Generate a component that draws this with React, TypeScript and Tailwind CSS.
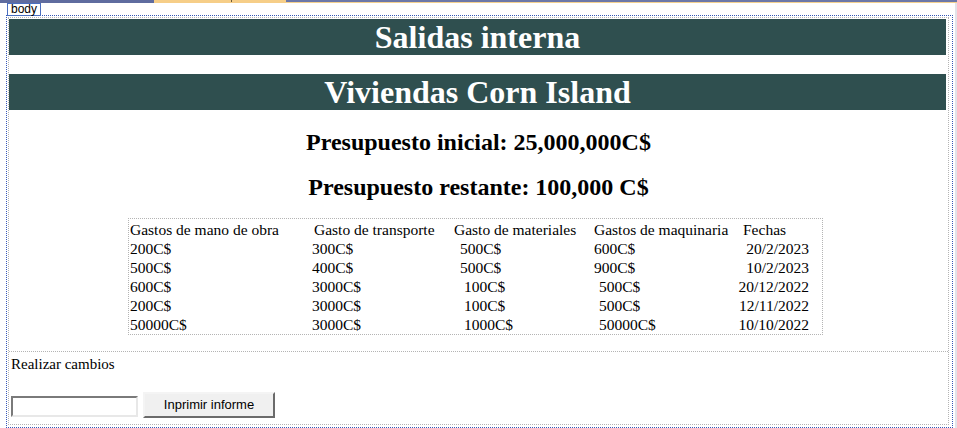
import React from 'react';

const filas = [
    { mano: '200C$', transporte: '300C$', materiales: '500C$', maquinaria: '600C$', fecha: '20/2/2023', padMat: 'pl-[6px]', padMaq: 'pl-0' },
    { mano: '500C$', transporte: '400C$', materiales: '500C$', maquinaria: '900C$', fecha: '10/2/2023', padMat: 'pl-[6px]', padMaq: 'pl-0' },
    { mano: '600C$', transporte: '3000C$', materiales: '100C$', maquinaria: '500C$', fecha: '20/12/2022', padMat: 'pl-[10px]', padMaq: 'pl-[5px]' },
    { mano: '200C$', transporte: '3000C$', materiales: '100C$', maquinaria: '500C$', fecha: '12/11/2022', padMat: 'pl-[10px]', padMaq: 'pl-[5px]' },
    { mano: '50000C$', transporte: '3000C$', materiales: '1000C$', maquinaria: '50000C$', fecha: '10/10/2022', padMat: 'pl-[10px]', padMaq: 'pl-[5px]' },
];

export default function App() {
    return (
        <div className="relative w-[957px] h-[428px] overflow-hidden bg-white flex flex-col text-black font-['Liberation_Serif','Times_New_Roman',serif]">
            {/* Designer top strip */}
            <div className="flex h-[3px] shrink-0">
                <div className="w-[154px] bg-[#5f6c9f]" />
                <div className="w-[132px] bg-[#f6ce88] relative">
                    <div className="absolute left-[77px] top-0 w-[1px] h-[2px] bg-[#6a5a3a]" />
                </div>
                <div className="flex-1 flex flex-col">
                    <div className="h-[2px] bg-[#6b77a8]" />
                    <div className="h-[1px] bg-[#f3d08f]" />
                </div>
            </div>

            {/* Tag label */}
            <div className="absolute left-[7px] top-[3px] w-[34px] h-[13px] border border-[#4a6fc0] bg-white text-[12px] leading-[11px] pl-[3px] font-['Liberation_Sans',Arial,sans-serif] z-10">
                body
            </div>

            <div className="flex flex-1">
                <div className="flex-1">
                    {/* body outline */}
                    <div className="mt-[12px] ml-[6px] w-[947px] h-[413px] border border-dotted border-[#3558b8]">
                        {/* form outline */}
                        <div className="ml-[1px] mt-[1px] w-[941px] h-[408px] border border-dotted border-[#b4b4b4] flex flex-col">
                            <div className="mt-[1px] mr-[2px] h-[36px] bg-[#2f4f4f] text-white font-bold text-[32px] leading-[36px] text-center">
                                Salidas interna
                            </div>
                            <div className="mt-[19px] mr-[2px] h-[36px] bg-[#2f4f4f] text-white font-bold text-[32px] leading-[36px] text-center">
                                Viviendas Corn Island
                            </div>

                            <div className="mt-[18px] h-[28px] leading-[28px] text-[24px] font-bold text-center">
                                Presupuesto inicial: 25,000,000C$
                            </div>
                            <div className="mt-[17px] h-[28px] leading-[28px] text-[24px] font-bold text-center">
                                Presupuesto restante: 100,000 C$
                            </div>

                            {/* Tabla de gastos */}
                            <div className="mt-[17px] ml-[119px] w-[695px] border border-dotted border-[#b4b4b4] pt-[1px] pl-[1px] text-[15.5px] leading-[19px]">
                                <div className="grid grid-cols-[182px_142px_140px_143px_1fr] h-[19px]">
                                    <div>Gastos de mano de obra</div>
                                    <div className="pl-[2px]">Gasto de transporte</div>
                                    <div>Gasto de materiales</div>
                                    <div>Gastos de maquinaria</div>
                                    <div className="pl-[6px]">Fechas</div>
                                </div>
                                {filas.map((f, idx) => (
                                    <div key={idx} className="grid grid-cols-[182px_142px_140px_143px_1fr] h-[19px]">
                                        <div>{f.mano}</div>
                                        <div>{f.transporte}</div>
                                        <div className={f.padMat}>{f.materiales}</div>
                                        <div className={f.padMaq}>{f.maquinaria}</div>
                                        <div className="text-right pr-[13px]">{f.fecha}</div>
                                    </div>
                                ))}
                            </div>

                            {/* Realizar cambios */}
                            <div className="mt-[16px] flex-1 border-t border-dotted border-[#b4b4b4]">
                                <div className="pt-[3px] pl-[2px] h-[22px] text-[15px] leading-[19px]">Realizar cambios</div>
                                <div className="mt-[18px] ml-[2px] flex items-end gap-[5px]">
                                    <input
                                        type="text"
                                        className="w-[127px] h-[21px] mb-[1px] bg-white border-2 border-t-[#7a7a7a] border-l-[#7a7a7a] border-r-[#e8e8e8] border-b-[#e8e8e8] outline-none"
                                    />
                                    <button className="w-[132px] h-[26px] bg-[#f0f0f0] border-2 border-t-[#f4f4f4] border-l-[#f4f4f4] border-r-[#6b6b6b] border-b-[#6b6b6b] text-[13px] text-black font-['Liberation_Sans',Arial,sans-serif]">
                                        Inprimir informe
                                    </button>
                                </div>
                            </div>
                        </div>
                    </div>
                </div>
                <div className="w-[2px] bg-[#e3e3ea]" />
            </div>
        </div>
    );
}
